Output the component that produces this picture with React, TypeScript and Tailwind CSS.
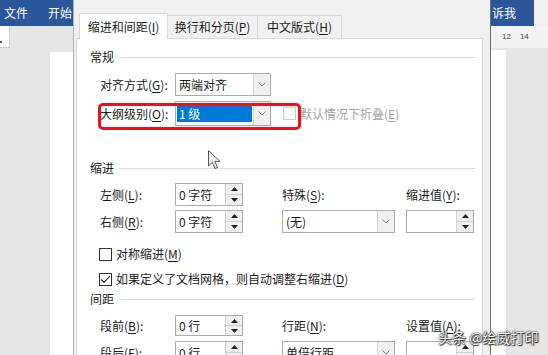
import React from "react";

const U = ({ c }: { c: string }) => <span className="underline underline-offset-[2px] decoration-[1px]">{c}</span>;

const Lbl = ({ t, k, colon = true }: { t: string; k: string; colon?: boolean }) => (
  <span className="whitespace-nowrap">
    {t}(<U c={k} />){colon ? ":" : ""}
  </span>
);

const Up = () => (
  <svg width="7" height="4" viewBox="0 0 7 4"><path d="M3.5 0L7 4H0z" fill="#222" /></svg>
);
const Down = () => (
  <svg width="7" height="4" viewBox="0 0 7 4"><path d="M0 0H7L3.5 4z" fill="#222" /></svg>
);
const Chevron = () => (
  <svg width="8" height="5" viewBox="0 0 8 5"><path d="M0.5 0.5L4 4L7.5 0.5" fill="none" stroke="#888" strokeWidth="1" /></svg>
);

function Spin({ value, h = "h-[23px]" }: { value: string; h?: string }) {
  return (
    <div className={`flex ${h} w-[68px] border border-[#acacac] bg-white`}>
      <div className="flex flex-1 items-center whitespace-pre pl-[3px] text-[12px]">{value}</div>
      <div className="flex w-[17px] flex-col border-l border-[#cfcfcf]">
        <div className="flex flex-1 items-center justify-center border-b border-[#cfcfcf] bg-[#efefef]">
          <Up />
        </div>
        <div className="flex flex-1 items-center justify-center bg-[#efefef]">
          <Down />
        </div>
      </div>
    </div>
  );
}

function Select({ value, w, h = "h-[23px]", selected = false }: { value: string; w: string; h?: string; selected?: boolean }) {
  return (
    <div className={`flex ${h} ${w} border border-[#acacac] bg-white`}>
      <div className="flex flex-1 items-center px-[1px] text-[12px]">
        {selected ? (
          <div className="flex h-[16px] w-full items-center whitespace-pre bg-[#0078d7] pl-[2px] text-white">{value}</div>
        ) : (
          <span className="pl-[2px]">{value}</span>
        )}
      </div>
      <div className="flex w-[17px] items-center justify-center border-l border-[#d4d4d4] bg-[#f0f0f0]">
        <Chevron />
      </div>
    </div>
  );
}

function Check({ checked = false, disabled = false }: { checked?: boolean; disabled?: boolean }) {
  return (
    <div
      className={`flex h-[13px] w-[13px] items-center justify-center border bg-white ${
        disabled ? "border-[#cccccc]" : "border-[#333333]"
      }`}
    >
      {checked && (
        <svg width="11" height="9" viewBox="0 0 11 9">
          <path d="M1 4.5L4 7.5L10 1" fill="none" stroke="#222" strokeWidth="1.1" />
        </svg>
      )}
    </div>
  );
}

function Group({ title, mt }: { title: string; mt: string }) {
  return (
    <div className={`${mt} flex h-[16px] items-center pl-[13px] pr-[7px] text-[12px]`}>
      <span>{title}</span>
      <div className="ml-[5px] h-px flex-1 bg-[#dcdcdc]" />
    </div>
  );
}

export default function App() {
  return (
    <div className="relative flex h-[355px] w-[548px] overflow-hidden bg-[#e6e6e6] text-[#1b1b1b] [font-family:'Noto_Sans_CJK_SC',sans-serif]">
      {/* Left word window */}
      <div className="flex w-[73px] shrink-0 flex-col">
        <div className="flex h-[26px] items-center whitespace-nowrap bg-[#2b579a] text-[12px] text-white">
          <span className="ml-[4px] shrink-0">文件</span>
          <span className="ml-[20px] shrink-0">开始</span>
        </div>
        <div className="flex h-[22px]">
          <div className="relative w-[10px] border-r border-b border-[#d0d0d0] bg-white">
            <div className="absolute left-0 top-[15px] h-[2px] w-[2px] bg-[#555]" />
          </div>
        </div>
        <div className="ml-[50px] mt-[4px] flex-1 bg-white" />
      </div>

      {/* Dialog */}
      <div className="flex w-[418px] shrink-0 flex-col border-l border-r border-l-[#b4b4b4] border-r-[#6f6f6f] bg-[#f0f0f0]">
        <div className="mt-[13px] flex h-[26px] items-end pl-[5px] text-[12px]">
          <div className="relative z-10 flex h-[26px] w-[89px] items-center justify-center border border-b-0 border-[#d9d9d9] bg-white">
            <Lbl t="缩进和间距" k="I" colon={false} />
          </div>
          <div className="flex h-[24px] w-[90px] items-center justify-center border border-l-0 border-[#d9d9d9]">
            <Lbl t="换行和分页" k="P" colon={false} />
          </div>
          <div className="flex h-[24px] w-[84px] items-center justify-center border border-l-0 border-[#d9d9d9]">
            <Lbl t="中文版式" k="H" colon={false} />
          </div>
        </div>

        <div className="-mt-px ml-[2px] flex w-[407px] flex-1 flex-col border border-[#d9d9d9] bg-white text-[12px]">
          <Group title="常规" mt="mt-[10px]" />

          <div className="mt-[8px] flex h-[23px] items-center pl-[23px]">
            <div className="w-[75px]"><Lbl t="对齐方式" k="G" /></div>
            <Select value="两端对齐" w="w-[96px]" />
          </div>

          <div className="mt-[5px] flex h-[25px] items-center pl-[23px]">
            <div className="w-[75px]"><Lbl t="大纲级别" k="O" /></div>
            <Select value="1 级" w="w-[96px]" h="h-[25px]" selected />
            <div className="ml-[12px]"><Check disabled /></div>
            <span className="ml-[4px] text-[#a3a3a3]"><Lbl t="默认情况下折叠" k="E" colon={false} /></span>
          </div>

          <Group title="缩进" mt="mt-[34px]" />

          <div className="mt-[7px] flex h-[23px] items-center pl-[23px]">
            <div className="w-[75px]"><Lbl t="左侧" k="L" /></div>
            <Spin value="0 字符" />
            <div className="ml-[39px] w-[124px]"><Lbl t="特殊" k="S" /></div>
            <div><Lbl t="缩进值" k="Y" /></div>
          </div>

          <div className="mt-[4px] flex h-[23px] items-center pl-[23px]">
            <div className="w-[75px]"><Lbl t="右侧" k="R" /></div>
            <Spin value="0 字符" />
            <div className="ml-[39px]"><Select value="(无)" w="w-[113px]" /></div>
            <div className="ml-[11px]"><Spin value="" /></div>
          </div>

          <div className="mt-[14px] flex h-[14px] items-center pl-[22px]">
            <Check />
            <span className="ml-[4px]"><Lbl t="对称缩进" k="M" colon={false} /></span>
          </div>

          <div className="mt-[11px] flex h-[14px] items-center pl-[22px]">
            <Check checked />
            <span className="ml-[4px]">如果定义了文档网格，则自动调整右缩进(<U c="D" />)</span>
          </div>

          <Group title="间距" mt="mt-[5px]" />

          <div className="mt-[8px] flex h-[21px] items-center pl-[23px]">
            <div className="w-[75px]"><Lbl t="段前" k="B" /></div>
            <Spin value="0 行" h="h-[21px]" />
            <div className="ml-[39px] w-[124px]"><Lbl t="行距" k="N" /></div>
            <div><Lbl t="设置值" k="A" /></div>
          </div>

          <div className="mt-[5px] flex h-[23px] items-start pl-[23px]">
            <div className="w-[75px] pt-[3px]"><Lbl t="段后" k="F" /></div>
            <Spin value="0 行" />
            <div className="ml-[39px]"><Select value="单倍行距" w="w-[113px]" /></div>
            <div className="ml-[11px]"><Spin value="" /></div>
          </div>
        </div>
      </div>

      {/* Right word window */}
      <div className="flex w-[57px] shrink-0 flex-col">
        <div className="flex h-[26px]">
          <div className="flex w-[43px] items-center whitespace-nowrap bg-[#2b579a] pl-[1px] text-[12px] text-white">诉我</div>
          <div className="flex-1 bg-[#f0f0f0]" />
        </div>
        <div className="flex h-[22px] items-center bg-[#f3f3f3] text-[8px] text-[#444] [font-family:'Liberation_Sans',sans-serif]">
          <span className="ml-[11px]">12</span>
          <span className="ml-[9px]">14</span>
        </div>
        <div className="mt-[2px] w-[15px] flex-1 bg-white" />
      </div>

      {/* Overlays */}
      <div className="pointer-events-none absolute left-[98px] top-[103px] h-[27px] w-[203px] rounded-[5px] border-[3px] border-[#e8141b]" />

      <svg className="absolute left-[208px] top-[150px]" width="14" height="20" viewBox="0 0 14 20">
        <path d="M0.5 0.5V16L4.3 12.4L7 18.5L9.5 17.4L6.9 11.5H12Z" fill="#eeeeee" stroke="#555" strokeWidth="1" strokeLinejoin="round" />
      </svg>

      <div className="absolute left-[438px] top-[327px] whitespace-nowrap text-[14px] text-white [text-shadow:0_0_1px_#000,0_0_2px_#222,1px_1px_1px_#333]">
        头条 @绘威打印
      </div>
    </div>
  );
}
